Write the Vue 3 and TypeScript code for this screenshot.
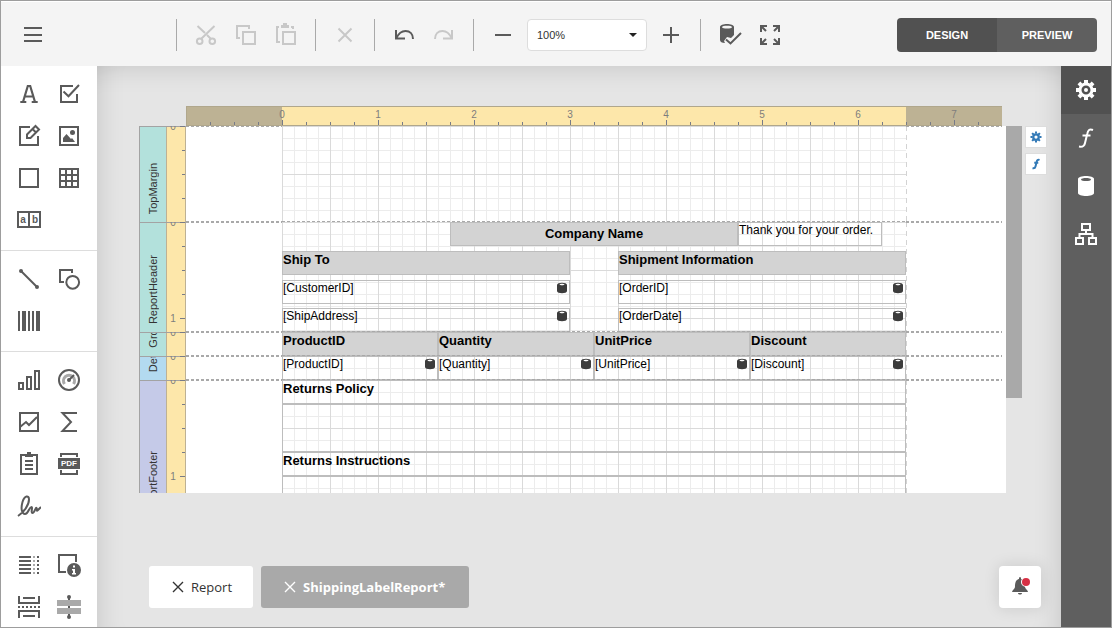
<script setup lang="ts">
import { h, ref } from 'vue'

interface Shape {
  d?: string
  fill?: string
  stroke?: string
  width?: number
  text?: string
  x?: number
  y?: number
  size?: number
}
interface Tool {
  label: string
  icon: string
  disabled?: boolean
}
interface Control {
  text: string
  left: number
  top: number
  width: number
  height: number
  kind: 'title' | 'head' | 'text' | 'field' | 'blank'
}
interface Band {
  name: string
  tone: string
  height: number
  controls: Control[]
}

const C = 'currentColor'
const circle = (x: number, y: number, r: number): string =>
  `M${x - r} ${y}a${r} ${r} 0 1 0 ${2 * r} 0a${r} ${r} 0 1 0 ${-2 * r} 0z`
const line = (d: string, width = 2, stroke = C): Shape => ({ d, stroke, width })
const solid = (d: string, fill = C): Shape => ({ d, fill })

const spokes = (inner: number, outer: number): string =>
  Array.from({ length: 8 }, (_, i) => {
    const a = (i * Math.PI) / 4
    return `M${12 + inner * Math.cos(a)} ${12 + inner * Math.sin(a)}L${12 + outer * Math.cos(a)} ${12 + outer * Math.sin(a)}`
  }).join('')

const fxPath = 'M19 4C15.5 2.5 14 4 13.200 8L11 17C10.200 21 8 21 5 20.5M8.5 9.5h8'

const icons: Record<string, Shape[]> = {
  menu: [line('M3 5h18M3 12h18M3 18h18')],
  cut: [line('M3.5 3L11 10M13 12l4 4M20.5 3L7 16'), line(circle(5.7, 18.3, 2.8) + circle(18.3, 18.3, 2.8))],
  copy: [line('M6 15H3V3h12v3'), line('M9 9h12v12H9z')],
  paste: [line('M6 19H3V4h2M17 4h2v2'), solid('M7 5V2h2V0h4v2h2v3z'), line('M9 9h12v12H9z')],
  remove: [line('M5.5 5.5l13 13M18.5 5.5l-13 13')],
  undo: [line('M4 7v8.5h9'), line('M4.5 15C7 9.5 10.5 8 13.5 8c4.5 0 7.5 3 7.5 8')],
  redo: [line('M20 7v8.5h-9'), line('M19.5 15C17 9.5 13.5 8 10.5 8C6 8 3 11 3 16')],
  minus: [line('M4 12h16')],
  plus: [line('M4 12h16M12 4v16')],
  validate: [
    solid('M2 4c0-4 14-4 14 0v8l-3 3-4-1-3 4 1 2c-3 0-5-1-5-3z'),
    solid('M4 4.2c0-1.8 10-1.8 10 0s-10 1.8-10 0z', '#f4f4f4'),
    line('M8 16.5l4.5 4L23 10'),
  ],
  fullscreen: [
    line('M3 9V3h6M15 3h6v6M21 15v6h-6M9 21H3v-6'),
    line('M3 3l5 5M21 3l-5 5M21 21l-5-5M3 21l5-5'),
  ],
  label: [line('M6 20L10.8 4h2.400L18 20M8 14.5h8M3.300 20h6M14.700 20h6', 2.2)],
  check: [line('M16 4H4v16h16v-8'), line('M6.5 9.5l5 4.800L22 3')],
  edit: [line('M13 3H3v18h18v-9'), line('M10 14v-3.5l8.5-8.5 3.5 3.5-8.5 8.5zM15.5 5l3.5 3.5')],
  picture: [line('M3 3h18v18H3z'), solid(circle(15.5, 8.5, 2.5)), solid('M6 18v-4l3.5-4 4.5 5 1-1 3 4z')],
  panel: [line('M3 3h18v18H3z')],
  table: [line('M3 3h18v18H3zM3 9h18M3 15h18M9 3v18M15 3v18')],
  comb: [
    line('M1 4h22v15H1zM12 4v15'),
    { text: 'a', x: 6, y: 15, size: 10, fill: C },
    { text: 'b', x: 18, y: 15, size: 10, fill: C },
  ],
  line: [line('M4 4l16 16'), solid(circle(4, 4, 2) + circle(20, 20, 2))],
  shape: [line('M7 15H3V3h12v3'), line(circle(15.7, 15.3, 6.4))],
  barcode: [solid('M1 2h2v20H1zM5 2h4v20H5zM11 2h2v20h-2zM15 2h2v20h-2zM19 2h4v20h-4z')],
  chart: [line('M2 15h4v6H2zM10 9h4v12h-4zM18 3h4v18h-4z')],
  gauge: [
    line(circle(12, 12, 10)),
    line('M7.5 16a5.5 5.5 0 1 1 9 0', 3, '#a9a9a9'),
    line('M12 12l5-5'),
    solid(circle(12, 12, 2)),
  ],
  spark: [line('M3 3h18v18H3z'), line('M3 17l6-5 3 3 8-8')],
  sigma: [line('M20 3H5.5l8.5 9-8.5 9H20')],
  contents: [line('M9 3H4v19h16V3h-5'), solid('M8 5V2h2V0h4v2h2v3zM8 8h8v2H8zM8 12h8v2H8zM8 16h8v2H8z')],
  pdf: [
    line('M4 5V2h16v3M4 18v4h16v-4'),
    solid('M1 6h22v11H1z'),
    { text: 'PDF', x: 12, y: 14, size: 8, fill: '#fff' },
  ],
  sign: [line('M1 22C7 18 12 11 12 5.5 12 1 7.5 1 5.5 8 3.5 15 5 20 8 20c3.5 0 4-7 6.5-7 1.500 0-1 6 1 6s3-6 4-5-.5 4 1.500 2l3-3')],
  columns: [
    solid('M2 3h12v2H2zM2 7h12v2H2zM2 11h12v2H2zM2 15h12v2H2zM2 19h12v2H2z'),
    solid('M16 3h2v2h-2zM16 7h2v2h-2zM16 11h2v2h-2zM16 15h2v2h-2zM16 19h2v2h-2z', '#a9a9a9'),
    solid('M20 3h2v2h-2zM20 7h2v2h-2zM20 11h2v2h-2zM20 15h2v2h-2zM20 19h2v2h-2z'),
  ],
  info: [
    line('M9 19H2V2h17v7'),
    solid(circle(17, 17, 7)),
    solid('M16 12.5h2v2h-2zM15 16h3v4h1v1.500h-4V20h1v-2.5h-1z', '#fff'),
  ],
  pagebreak: [
    line('M2 1v7h20V1M6 3h12M2 23v-7h20v7M6 21h12'),
    solid('M1 11h2v2H1zM5 11h2v2H5zM9 11h2v2H9zM13 11h2v2h-2zM17 11h2v2h-2zM21 11h2v2h-2z'),
  ],
  crossband: [
    line('M12 2v20'),
    solid(circle(12, 2, 2) + circle(12, 22, 2)),
    solid('M0 5h24v6H0zM0 13h24v6H0z', '#a9a9a9'),
    solid('M11 11h2v2h-2z'),
  ],
  gear: [line(circle(12, 12, 6), 3), line(spokes(7, 10), 4), solid(circle(12, 12, 2))],
  smallGear: [line(circle(12, 12, 5.5), 4.5), line(spokes(7, 11), 4)],
  fx: [line(fxPath)],
  smallFx: [line(fxPath, 4)],
  database: [solid('M4 5c0-4 16-4 16 0v14c0 4-16 4-16 0z'), solid('M7 5.5c0-2 10-2 10 0s-10 2-10 0z', '#5f5f5f')],
  tree: [line('M8 2h8v6H8zM2 16h7v6H2zM15 16h7v6h-7zM12 8v4M5.5 16v-4h13v4')],
  bell: [
    solid('M12 2c1 0 1 1 1 2 4 1 4 6 4 8 0 2 3 3 3 5H4c0-2 3-3 3-5 0-2 0-7 4-8 0-1 0-2 1-2zM10 18h4c0 2-4 2-4 0z'),
    solid(circle(18, 7, 5), '#fff'),
    solid(circle(18, 7, 4), '#d63044'),
  ],
  close: [line('M2 2l20 20M22 2L2 22', 2.8)],
  field: [
    solid('M2 6c0-6 20-6 20 0v12c0 6-20 6-20 0z', '#3c3c3c'),
    solid('M7 5c0-2 10-2 10 0s-10 2-10 0z', '#fff'),
  ],
}

const Icon = (props: { name: string }) =>
  h(
    'svg',
    { viewBox: '0 0 24 24', 'aria-hidden': 'true' },
    icons[props.name].map((s) =>
      s.text
        ? h('text', { x: s.x, y: s.y, fill: s.fill, 'font-size': s.size, 'font-weight': 'bold', 'text-anchor': 'middle' }, s.text)
        : h('path', { d: s.d, fill: s.fill ?? 'none', stroke: s.stroke, 'stroke-width': s.width }),
    ),
  )
Icon.props = ['name']

const editGroups: Tool[][] = [
  [
    { label: 'Cut', icon: 'cut', disabled: true },
    { label: 'Copy', icon: 'copy', disabled: true },
    { label: 'Paste', icon: 'paste', disabled: true },
  ],
  [{ label: 'Delete', icon: 'remove', disabled: true }],
  [
    { label: 'Undo', icon: 'undo' },
    { label: 'Redo', icon: 'redo', disabled: true },
  ],
]

const viewTools: Tool[] = [
  { label: 'Validate Bindings', icon: 'validate' },
  { label: 'Full Screen', icon: 'fullscreen' },
]

const toolbox: Tool[][] = [
  [
    { label: 'Label', icon: 'label' },
    { label: 'Check Box', icon: 'check' },
    { label: 'Rich Text', icon: 'edit' },
    { label: 'Picture Box', icon: 'picture' },
    { label: 'Panel', icon: 'panel' },
    { label: 'Table', icon: 'table' },
    { label: 'Character Comb', icon: 'comb' },
  ],
  [
    { label: 'Line', icon: 'line' },
    { label: 'Shape', icon: 'shape' },
    { label: 'Bar Code', icon: 'barcode' },
  ],
  [
    { label: 'Chart', icon: 'chart' },
    { label: 'Gauge', icon: 'gauge' },
    { label: 'Sparkline', icon: 'spark' },
    { label: 'Pivot Grid', icon: 'sigma' },
    { label: 'Table of Contents', icon: 'contents' },
    { label: 'PDF Content', icon: 'pdf' },
    { label: 'PDF Signature', icon: 'sign' },
  ],
  [
    { label: 'Subreport', icon: 'columns' },
    { label: 'Page Info', icon: 'info' },
    { label: 'Page Break', icon: 'pagebreak' },
    { label: 'Cross-Band Line', icon: 'crossband' },
  ],
]

const panels: Tool[] = [
  { label: 'Properties', icon: 'gear' },
  { label: 'Expressions', icon: 'fx' },
  { label: 'Field List', icon: 'database' },
  { label: 'Report Explorer', icon: 'tree' },
]

const gadgets: Tool[] = [
  { label: 'Report properties', icon: 'smallGear' },
  { label: 'Report expressions', icon: 'smallFx' },
]

const columns = ['ProductID', 'Quantity', 'UnitPrice', 'Discount']
const bands: Band[] = [
  { name: 'TopMargin', tone: 'teal', height: 96, controls: [] },
  {
    name: 'ReportHeader',
    tone: 'teal',
    height: 110,
    controls: [
      { text: 'Company Name', left: 168, top: 0, width: 288, height: 24, kind: 'title' },
      { text: 'Thank you for your order.', left: 456, top: 0, width: 144, height: 24, kind: 'text' },
      { text: 'Ship To', left: 0, top: 29, width: 288, height: 24, kind: 'head' },
      { text: 'Shipment Information', left: 336, top: 29, width: 288, height: 24, kind: 'head' },
      { text: '[CustomerID]', left: 0, top: 58, width: 288, height: 24, kind: 'field' },
      { text: '[OrderID]', left: 336, top: 58, width: 288, height: 24, kind: 'field' },
      { text: '[ShipAddress]', left: 0, top: 86, width: 288, height: 24, kind: 'field' },
      { text: '[OrderDate]', left: 336, top: 86, width: 288, height: 24, kind: 'field' },
    ],
  },
  {
    name: 'GroupHeader',
    tone: 'teal',
    height: 24,
    controls: columns.map((c, i) => ({ text: c, left: i * 156, top: 0, width: 156, height: 24, kind: 'head' as const })),
  },
  {
    name: 'Detail',
    tone: 'blue',
    height: 24,
    controls: columns.map((c, i) => ({ text: `[${c}]`, left: i * 156, top: 0, width: 156, height: 24, kind: 'field' as const })),
  },
  {
    name: 'ReportFooter',
    tone: 'violet',
    height: 144,
    controls: [
      { text: 'Returns Policy', left: 0, top: 0, width: 624, height: 24, kind: 'blank' },
      { text: '', left: 0, top: 24, width: 624, height: 48, kind: 'blank' },
      { text: 'Returns Instructions', left: 0, top: 72, width: 624, height: 24, kind: 'blank' },
      { text: '', left: 0, top: 96, width: 624, height: 48, kind: 'blank' },
    ],
  },
]

const ticks = (length: number): number[] => Array.from({ length: Math.ceil(length / 24) }, (_, i) => i * 24)
const topTicks = ticks(816).slice(1)

const zoom = ref('100%')
const modes = ['DESIGN', 'PREVIEW'] as const
const mode = ref<(typeof modes)[number]>('DESIGN')
const activePanel = ref('Properties')
const reports = [
  { name: 'Report', current: false },
  { name: 'ShippingLabelReport*', current: true },
]
</script>

<template>
  <div class="designer">
    <header class="topbar">
      <button class="tool" aria-label="Menu"><Icon name="menu" /></button>
      <div class="tools">
        <div v-for="(group, g) in editGroups" :key="g" class="tool-group">
          <button v-for="t in group" :key="t.label" class="tool" :aria-label="t.label" :disabled="t.disabled">
            <Icon :name="t.icon" />
          </button>
        </div>
        <div class="tool-group">
          <button class="tool" aria-label="Zoom out"><Icon name="minus" /></button>
          <div class="zoom">
            <select v-model="zoom" aria-label="Zoom">
              <option>50%</option>
              <option>100%</option>
              <option>150%</option>
            </select>
            <svg class="caret" viewBox="0 0 8 4"><path d="M0 0h8L4 4z" fill="#222" /></svg>
          </div>
          <button class="tool" aria-label="Zoom in"><Icon name="plus" /></button>
        </div>
        <div class="tool-group">
          <button v-for="t in viewTools" :key="t.label" class="tool" :aria-label="t.label"><Icon :name="t.icon" /></button>
        </div>
      </div>
      <div class="modes">
        <button v-for="m in modes" :key="m" :class="{ on: mode === m }" @click="mode = m">{{ m }}</button>
      </div>
    </header>

    <div class="body">
      <nav class="toolbox" aria-label="Toolbox">
        <div v-for="(group, g) in toolbox" :key="g" class="box-group">
          <button v-for="t in group" :key="t.label" class="box-tool" :aria-label="t.label"><Icon :name="t.icon" /></button>
        </div>
      </nav>

      <main class="surface">
        <div class="canvas">
          <div class="sheet">
            <svg class="ruler-top" width="816" height="20">
              <rect width="816" height="20" fill="#fde7aa" />
              <rect width="96" height="20" fill="#bdb294" />
              <rect x="720" width="96" height="20" fill="#bdb294" />
              <path d="M0 .5H816M0 19.5H816M.5 0V20" stroke="#b0a78c" />
              <path v-for="t in topTicks" :key="t" :d="`M${t + 0.5} 19v${t % 96 ? -3 : -5}`" stroke="#777b88" />
              <text v-for="n in 8" :key="n" :x="n * 96" y="12" text-anchor="middle">{{ n - 1 }}</text>
            </svg>
            <section v-for="b in bands" :key="b.name" class="band" :style="{ height: b.height + 'px' }">
              <div class="band-name" :class="b.tone"><span>{{ b.name }}</span></div>
              <svg class="ruler-side" width="20" :height="b.height">
                <rect width="20" :height="b.height" fill="#fde7aa" />
                <path :d="`M.5 0V${b.height}M19.5 0V${b.height}`" stroke="#bdb194" />
                <path d="M0 .5H20" stroke="#a3a0a0" />
                <path v-for="t in ticks(b.height)" :key="t" :d="`M19 ${t + 0.5}h${t % 96 ? -3 : -5}`" stroke="#777b88" />
                <text x="7" y="4" text-anchor="middle">0</text>
                <text v-if="b.height > 100" x="7" y="100" text-anchor="middle">1</text>
              </svg>
              <div class="margin" />
              <div class="grid">
                <div
                  v-for="(c, i) in b.controls"
                  :key="i"
                  class="control"
                  :class="c.kind"
                  :style="{ left: c.left + 'px', top: c.top + 'px', width: c.width + 'px', height: c.height + 'px' }"
                >
                  <span>{{ c.text }}</span>
                  <Icon v-if="c.kind === 'field'" name="field" class="bound" />
                </div>
              </div>
              <div class="margin right" />
            </section>
          </div>
          <div class="scroll"><div class="thumb" /></div>
          <div class="gadgets">
            <button v-for="t in gadgets" :key="t.label" :aria-label="t.label"><Icon :name="t.icon" /></button>
          </div>
        </div>

        <footer class="tabs">
          <div v-for="r in reports" :key="r.name" class="tab" :class="{ current: r.current }">
            <button class="close" :aria-label="'Close ' + r.name"><Icon name="close" /></button>
            <button>{{ r.name }}</button>
          </div>
          <button class="bell" aria-label="Notifications"><Icon name="bell" /></button>
        </footer>
      </main>

      <aside class="panels">
        <button v-for="p in panels" :key="p.label" :aria-label="p.label" :class="{ on: activePanel === p.label }" @click="activePanel = p.label">
          <Icon :name="p.icon" />
        </button>
      </aside>
    </div>
  </div>
</template>

<style>
body {
  margin: 0;
}
</style>

<style scoped>
.designer {
  box-sizing: border-box;
  display: flex;
  flex-direction: column;
  height: 100vh;
  border: 1px solid #9d9d9d;
  overflow: hidden;
  font-family: "Liberation Sans", Arial, sans-serif;
  color: #5a5a5a;
}
button {
  margin: 0;
  padding: 0;
  border: 0;
  background: none;
  color: inherit;
  font: inherit;
  cursor: pointer;
}
svg {
  display: block;
}
.topbar {
  box-sizing: border-box;
  flex: none;
  display: flex;
  align-items: center;
  height: 65px;
  padding: 1px 14px 0 12px;
  border-top: 1px solid #fff;
  background: #f4f4f4;
}
.tool {
  display: grid;
  place-items: center;
  width: 40px;
  height: 40px;
}
.tool svg,
.box-tool svg,
.panels svg,
.bell svg {
  width: 24px;
  height: 24px;
}
.tool:disabled {
  color: #c8c8c8;
  cursor: default;
}
.tools {
  display: flex;
  align-items: center;
  margin-left: 123px;
}
.tool-group {
  display: flex;
  align-items: center;
  height: 32px;
  padding: 0 9px;
  border-left: 1px solid #a9a9a9;
}
.zoom {
  display: grid;
  align-items: center;
  margin: 0 4px;
}
.zoom select {
  grid-area: 1 / 1;
  box-sizing: border-box;
  width: 120px;
  height: 32px;
  padding: 0 9px;
  border: 1px solid #ddd;
  border-radius: 4px;
  appearance: none;
  background: #fff;
  color: #333;
  font: 11px "Liberation Sans", Arial, sans-serif;
}
.caret {
  grid-area: 1 / 1;
  justify-self: end;
  width: 8px;
  height: 4px;
  margin-right: 10px;
  pointer-events: none;
}
.modes {
  display: flex;
  margin-left: auto;
  border-radius: 4px;
  overflow: hidden;
}
.modes button {
  width: 100px;
  height: 34px;
  background: #5f5f5f;
  color: #fff;
  font-size: 11px;
  font-weight: bold;
}
.modes .on {
  background: #515151;
}
.body {
  flex: 1;
  display: flex;
  min-height: 0;
}
.toolbox {
  flex: none;
  overflow: hidden;
  background: #fff;
}
.box-group {
  display: grid;
  grid-template-columns: 40px 40px;
  grid-auto-rows: 42px;
  padding: 7px 8px 9px;
  border-bottom: 1px solid #ddd;
}
.box-tool {
  display: grid;
  place-items: center;
}
.surface {
  flex: 1;
  display: flex;
  flex-direction: column;
  min-width: 0;
  padding: 40px 0 19px 42px;
  background: #e5e5e5;
  box-shadow:
    inset 0 28px 28px -28px rgba(0, 0, 0, 0.15),
    inset 28px 0 28px -28px rgba(0, 0, 0, 0.15),
    inset -28px 0 28px -28px rgba(0, 0, 0, 0.15);
}
.canvas {
  flex: 1;
  display: flex;
  min-height: 0;
  overflow: hidden;
}
.sheet {
  flex: none;
}
.ruler-top {
  margin-left: 47px;
}
.ruler-top text,
.ruler-side text {
  fill: #7d7d7d;
  font-size: 10px;
}
.band {
  display: grid;
  grid-template-columns: 27px 20px 96px 624px 100px;
  background: #fff;
}
.band-name {
  box-sizing: border-box;
  display: flex;
  justify-content: center;
  align-items: flex-end;
  min-height: 0;
  padding-bottom: 8px;
  border: solid #a3a3a3;
  border-width: 1px 0 0 1px;
  overflow: hidden;
  color: #333;
  font-size: 11px;
  line-height: 13px;
}
.band-name span {
  writing-mode: vertical-rl;
  transform: rotate(180deg);
}
.teal {
  background: #b3e1dc;
}
.blue {
  background: #b3daf0;
}
.violet {
  background: #c5cae8;
}
.margin {
  background:
    repeating-linear-gradient(to right, #a9a9a9 0 3px, transparent 3px 5px) top / 96px 1px no-repeat,
    repeating-linear-gradient(to right, #a9a9a9 0 3px, transparent 3px 5px) bottom / 96px 1px no-repeat;
}
.margin.right {
  background:
    repeating-linear-gradient(to right, #a9a9a9 0 3px, transparent 3px 5px) left top / 96px 1px no-repeat,
    repeating-linear-gradient(to right, #a9a9a9 0 3px, transparent 3px 5px) left bottom / 96px 1px no-repeat,
    repeating-linear-gradient(to bottom, #d3d3d3 0 5px, transparent 5px 9px) left / 1px 100% no-repeat;
}
.grid {
  position: relative;
  background:
    linear-gradient(to right, #dadada 1px, transparent 1px) 0 0 / 48px 48px,
    linear-gradient(to bottom, #dadada 1px, transparent 1px) 0 0 / 48px 48px,
    linear-gradient(to right, #ececec 1px, transparent 1px) 0 0 / 12px 12px,
    linear-gradient(to bottom, #ececec 1px, transparent 1px) 0 0 / 12px 12px;
}
.grid::after {
  content: "";
  position: absolute;
  inset: auto 0 0;
  height: 1px;
  background: repeating-linear-gradient(to right, #a9a9a9 0 3px, transparent 3px 5px);
}
.control {
  box-sizing: border-box;
  position: absolute;
  border: 1px solid #bdbdbd;
  color: #000;
  font-size: 12px;
  line-height: 14px;
  white-space: nowrap;
}
.title,
.head {
  background: #d3d3d3;
}
.title,
.head,
.blank {
  font-size: 13px;
  font-weight: bold;
  line-height: 16px;
}
.title {
  display: grid;
  place-items: center;
}
.bound {
  position: absolute;
  top: 1px;
  right: 1px;
  width: 12px;
  height: 12px;
}
.scroll {
  width: 16px;
  margin-top: 20px;
}
.thumb {
  height: 74%;
  background: #a9a9a9;
}
.gadgets {
  display: flex;
  flex-direction: column;
  gap: 5px;
  margin: 20px 0 0 3px;
}
.gadgets button {
  box-sizing: border-box;
  display: grid;
  place-items: center;
  width: 22px;
  height: 22px;
  border: 1px solid #ddd;
  background: #fff;
  color: #337ab7;
}
.gadgets svg {
  width: 12px;
  height: 12px;
}
.tabs {
  flex: none;
  display: flex;
  gap: 8px;
  margin-top: 73px;
  padding: 0 20px 0 10px;
}
.tab {
  display: flex;
  align-items: center;
  gap: 7px;
  height: 42px;
  padding: 0 21px 0 23px;
  border-radius: 3px;
  background: #fff;
  color: #333;
  font-family: "Open Sans", "Noto Sans", sans-serif;
  font-size: 13px;
}
.tab.current {
  padding-right: 24px;
  background: #a9a9a9;
  color: #fff;
  font-weight: bold;
}
.close svg {
  width: 12px;
  height: 12px;
}
.bell {
  display: grid;
  place-items: center;
  width: 42px;
  height: 42px;
  margin-left: auto;
  border-radius: 4px;
  background: #fff;
  box-shadow: 0 0 16px rgba(0, 0, 0, 0.12);
}
.panels {
  flex: none;
  display: flex;
  flex-direction: column;
  width: 50px;
  background: #5f5f5f;
  color: #fff;
}
.panels button {
  display: grid;
  place-items: center;
  height: 48px;
}
.panels .on {
  background: #515151;
}
</style>
